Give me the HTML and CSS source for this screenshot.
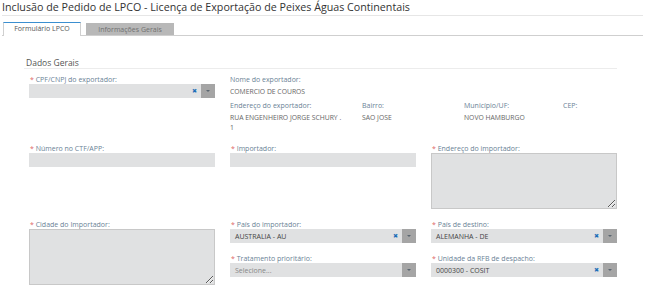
FILE: index.html
```html
<!DOCTYPE html>
<html lang="pt-BR">
  <head>
    <meta charset="utf-8" />
    <meta name="viewport" content="width=device-width, initial-scale=1.0" />
    <title>Inclusão de Pedido de LPCO</title>
    <link rel="stylesheet" href="styles.css">
  </head>
  <body>
    <h1 class="page-title">Inclusão de Pedido de LPCO - Licença de Exportação de Peixes Águas Continentais</h1>

    <div class="tabs">
      <span class="tab active">Formulário LPCO</span>
      <span class="tab">Informações Gerais</span>
    </div>

    <div class="section">
      <h2 class="section-title">Dados Gerais</h2>

      <div class="form-grid">
        <!-- linha 1 -->
        <div class="field">
          <label class="req">CPF/CNPJ do exportador:</label>
          <div class="select">
            <span class="select-value"></span>
            <span class="select-clear">&#x2716;</span>
            <span class="select-arrow"></span>
          </div>
        </div>
        <div class="field span-2">
          <div class="info">
            <span class="info-label">Nome do exportador:</span>
            <span class="info-value">COMERCIO DE COUROS</span>
          </div>
          <div class="info-row">
            <div class="info">
              <span class="info-label">Endereço do exportador:</span>
              <span class="info-value">RUA ENGENHEIRO JORGE SCHURY .<br>1</span>
            </div>
            <div class="info">
              <span class="info-label">Bairro:</span>
              <span class="info-value">SAO JOSE</span>
            </div>
            <div class="info">
              <span class="info-label">Município/UF:</span>
              <span class="info-value">NOVO HAMBURGO</span>
            </div>
            <div class="info">
              <span class="info-label">CEP:</span>
              <span class="info-value"></span>
            </div>
          </div>
        </div>

        <!-- linha 2 -->
        <div class="field">
          <label class="req">Número no CTF/APP:</label>
          <input class="input" type="text">
        </div>
        <div class="field">
          <label class="req">Importador:</label>
          <input class="input" type="text">
        </div>
        <div class="field">
          <label class="req">Endereço do importador:</label>
          <textarea class="textarea"></textarea>
        </div>

        <!-- linha 3 -->
        <div class="field">
          <label class="req">Cidade do Importador:</label>
          <textarea class="textarea"></textarea>
        </div>
        <div class="field stack">
          <div>
            <label class="req">País do importador:</label>
            <div class="select">
              <span class="select-value">AUSTRALIA - AU</span>
              <span class="select-clear">&#x2716;</span>
              <span class="select-arrow"></span>
            </div>
          </div>
          <div>
            <label class="req">Tratamento prioritário:</label>
            <div class="select">
              <span class="select-value placeholder">Selecione...</span>
              <span class="select-arrow"></span>
            </div>
          </div>
        </div>
        <div class="field stack">
          <div>
            <label class="req">País de destino:</label>
            <div class="select">
              <span class="select-value">ALEMANHA - DE</span>
              <span class="select-clear">&#x2716;</span>
              <span class="select-arrow"></span>
            </div>
          </div>
          <div>
            <label class="req">Unidade da RFB de despacho:</label>
            <div class="select">
              <span class="select-value">0000300 - COSIT</span>
              <span class="select-clear">&#x2716;</span>
              <span class="select-arrow"></span>
            </div>
          </div>
        </div>
      </div>
    </div>
  </body>
</html>
```

FILE: styles.css
```css
body {
  margin: 0;
  padding: 0 7px 0 2px;
  font-family: "Open Sans", "Noto Sans", sans-serif;
  color: #555;
  background-color: #fff;
  overflow: hidden;
}

.page-title {
  margin: 0;
  padding: 0;
  font-size: 10.7px;
  font-weight: normal;
  line-height: 15px;
  color: #333;
  border-bottom: 1px solid #e6e6e6;
}

.tabs {
  display: flex;
  align-items: flex-end;
  gap: 5px;
  margin-top: 6px;
  padding-left: 1px;
  border-bottom: 1px solid #cfcfcf;
}

.tab {
  display: block;
  width: 86px;
  height: 11px;
  font-size: 7px;
  line-height: 11px;
  text-align: center;
  color: #707070;
  background-color: #b8b8b8;
  border: 1px solid #b8b8b8;
  border-bottom: none;
}

.tab.active {
  width: 76px;
  height: 12px;
  color: #555;
  background-color: #fff;
  border-color: #d0d0d0;
  border-top: 1px solid #3b8fd0;
  margin-bottom: -1px;
  padding-bottom: 1px;
}

.section {
  padding: 21px 26px 0 22px;
}

.section-title {
  margin: 0;
  padding-left: 2px;
  font-size: 8.5px;
  font-weight: normal;
  line-height: 11px;
  color: #555;
  border-bottom: 1px solid #ececec;
}

.form-grid {
  display: grid;
  grid-template-columns: 186px 186px 186px;
  column-gap: 15px;
  row-gap: 11px;
  padding: 6px 0 0 5px;
}

.span-2 {
  grid-column: span 2;
}

label {
  display: block;
  font-size: 7px;
  line-height: 9px;
  color: #6a8296;
  margin-bottom: 0;
}

.req::before {
  content: "* ";
  color: #e06666;
}

.field label {
  padding-left: 1px;
}

.stack {
  display: flex;
  flex-direction: column;
  gap: 11px;
}

.select {
  display: flex;
  align-items: center;
  height: 14px;
  background-color: #e0e1e2;
}

.select-value {
  flex: 1;
  padding-left: 5px;
  font-size: 7px;
  color: #444;
}

.select-value.placeholder {
  color: #888;
}

.select-clear {
  width: 8px;
  font-size: 6px;
  color: #1d6fb8;
  text-align: center;
  margin-right: 3px;
}

.select-arrow {
  position: relative;
  width: 14px;
  height: 14px;
  background-color: #a5a5a5;
}

.select-arrow::after {
  content: "";
  position: absolute;
  left: 5px;
  top: 6px;
  border-left: 2.5px solid transparent;
  border-right: 2.5px solid transparent;
  border-top: 2.5px solid #5b6670;
}

.input {
  display: block;
  box-sizing: border-box;
  width: 100%;
  height: 14px;
  margin: 0;
  border: none;
  background-color: #e0e1e2;
}

.textarea {
  display: block;
  box-sizing: border-box;
  width: 100%;
  height: 56px;
  margin: 0;
  resize: vertical;
  border: 1px solid #c8c8c8;
  background-color: #e0e1e2;
}

.info {
  display: flex;
  flex-direction: column;
}

.info-label {
  font-size: 7px;
  line-height: 9px;
  color: #6a8296;
}

.info-value {
  margin-top: 3px;
  font-size: 6.8px;
  line-height: 10px;
  color: #666;
}

.info-row {
  display: grid;
  grid-template-columns: 132px 102px 99px 40px;
  margin-top: 4px;
}
```
